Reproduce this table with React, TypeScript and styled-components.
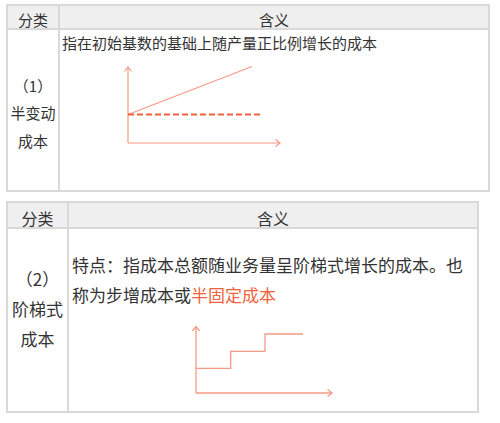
import React from "react";
import styled, { createGlobalStyle } from "styled-components";

const Global = createGlobalStyle`
  html, body { margin: 0; padding: 0; background: #ffffff; }
  body { font-family: "Noto Sans CJK SC", "Noto Sans", sans-serif; color: #333333; }
`;

const LINE = "#d9d9d9";
const AXIS = "#f59a84";
const ACCENT = "#f0623c";

const Page = styled.main`
  display: flex;
  flex-direction: column;
  gap: 9px;
  padding: 4px 0 0 6px;
  width: 500px;
  height: 423px;
  box-sizing: border-box;
`;

const Table = styled.section<{ $width: number; $col: number; $head: number; $body: number }>`
  display: grid;
  grid-template-columns: ${(p) => p.$col}px 1fr;
  grid-template-rows: ${(p) => p.$head}px ${(p) => p.$body}px;
  width: ${(p) => p.$width}px;
  box-sizing: border-box;
  border-top: 2px solid ${LINE};
  border-left: 2px solid ${LINE};
`;

const HeadCell = styled.div<{ $size: number }>`
  display: flex;
  align-items: center;
  justify-content: center;
  background: #efefef;
  border-right: 2px solid ${LINE};
  border-bottom: 2px solid ${LINE};
  font-size: ${(p) => p.$size}px;
  line-height: 1;
  padding-top: 5px;
  box-sizing: border-box;
`;

const NameCell = styled.div<{ $size: number; $lh: number; $shift: number }>`
  display: flex;
  flex-direction: column;
  align-items: center;
  justify-content: center;
  border-right: 2px solid ${LINE};
  border-bottom: 2px solid ${LINE};
  font-size: ${(p) => p.$size}px;
  line-height: ${(p) => p.$lh}px;
  padding-top: ${(p) => (p.$shift > 0 ? p.$shift * 2 : 0)}px;
  padding-bottom: ${(p) => (p.$shift < 0 ? -p.$shift * 2 : 0)}px;
  box-sizing: border-box;
`;

const BodyCell = styled.div`
  display: flex;
  flex-direction: column;
  align-items: flex-start;
  border-right: 2px solid ${LINE};
  border-bottom: 2px solid ${LINE};
  box-sizing: border-box;
`;

const Text = styled.div<{ $size: number; $lh: number; $top: number; $left: number }>`
  display: flex;
  flex-direction: column;
  padding: ${(p) => p.$top}px 0 0 ${(p) => p.$left}px;
  font-size: ${(p) => p.$size}px;
  line-height: ${(p) => p.$lh}px;
  color: #333333;
  white-space: nowrap;
`;

const Line = styled.div`
  display: flex;
`;

const Accent = styled.span`
  color: ${ACCENT};
`;

const Chart = styled.svg<{ $top: number; $left: number }>`
  display: block;
  margin: ${(p) => p.$top}px 0 0 ${(p) => p.$left}px;
  overflow: visible;
`;

function LinearChart() {
  return (
    <Chart $top={7} $left={58} width="170" height="90" viewBox="0 0 170 90">
      <g fill="none" stroke={AXIS} strokeWidth="1.2">
        <line x1="10" y1="83" x2="10" y2="7" />
        <polyline points="6.5,11.5 10,7 13.5,11.5" />
        <line x1="10" y1="83" x2="162" y2="83" />
        <polyline points="157.5,79.5 162,83 157.5,86.5" />
        <line x1="10" y1="54.5" x2="134" y2="6.5" />
      </g>
      <line
        x1="10"
        y1="54.5"
        x2="144"
        y2="54.5"
        stroke={ACCENT}
        strokeWidth="2"
        strokeDasharray="6 3"
      />
    </Chart>
  );
}

function StepChart() {
  return (
    <Chart $top={8} $left={117} width="150" height="80" viewBox="0 0 150 80">
      <g fill="none" stroke={AXIS} strokeWidth="1.3">
        <line x1="10" y1="75" x2="10" y2="8.5" />
        <polyline points="6.5,13 10,8.5 13.5,13" />
        <line x1="10" y1="75" x2="146" y2="75" />
        <polyline points="141.5,71.5 146,75 141.5,78.5" />
        <polyline points="10,50.3 44.7,50.3 44.7,33.3 79,33.3 79,16 117,16" />
      </g>
    </Chart>
  );
}

export default function App() {
  return (
    <>
      <Global />
      <Page>
        <Table $width={484} $col={52} $head={24} $body={162}>
          <HeadCell $size={15}>分类</HeadCell>
          <HeadCell $size={15}>含义</HeadCell>
          <NameCell $size={15} $lh={27.5} $shift={3}>
            <span>（1）</span>
            <span>半变动</span>
            <span>成本</span>
          </NameCell>
          <BodyCell>
            <Text $size={15} $lh={20} $top={3} $left={2}>
              <Line>指在初始基数的基础上随产量正比例增长的成本</Line>
            </Text>
            <LinearChart />
          </BodyCell>
        </Table>

        <Table $width={473} $col={61} $head={26} $body={184}>
          <HeadCell $size={16}>分类</HeadCell>
          <HeadCell $size={16}>含义</HeadCell>
          <NameCell $size={17} $lh={30} $shift={-11}>
            <span>（2）</span>
            <span>阶梯式</span>
            <span>成本</span>
          </NameCell>
          <BodyCell>
            <Text $size={17} $lh={30} $top={21} $left={3}>
              <Line>特点：指成本总额随业务量呈阶梯式增长的成本。也</Line>
              <Line>
                <span>称为步增成本或</span>
                <Accent>半固定成本</Accent>
              </Line>
            </Text>
            <StepChart />
          </BodyCell>
        </Table>
      </Page>
    </>
  );
}
